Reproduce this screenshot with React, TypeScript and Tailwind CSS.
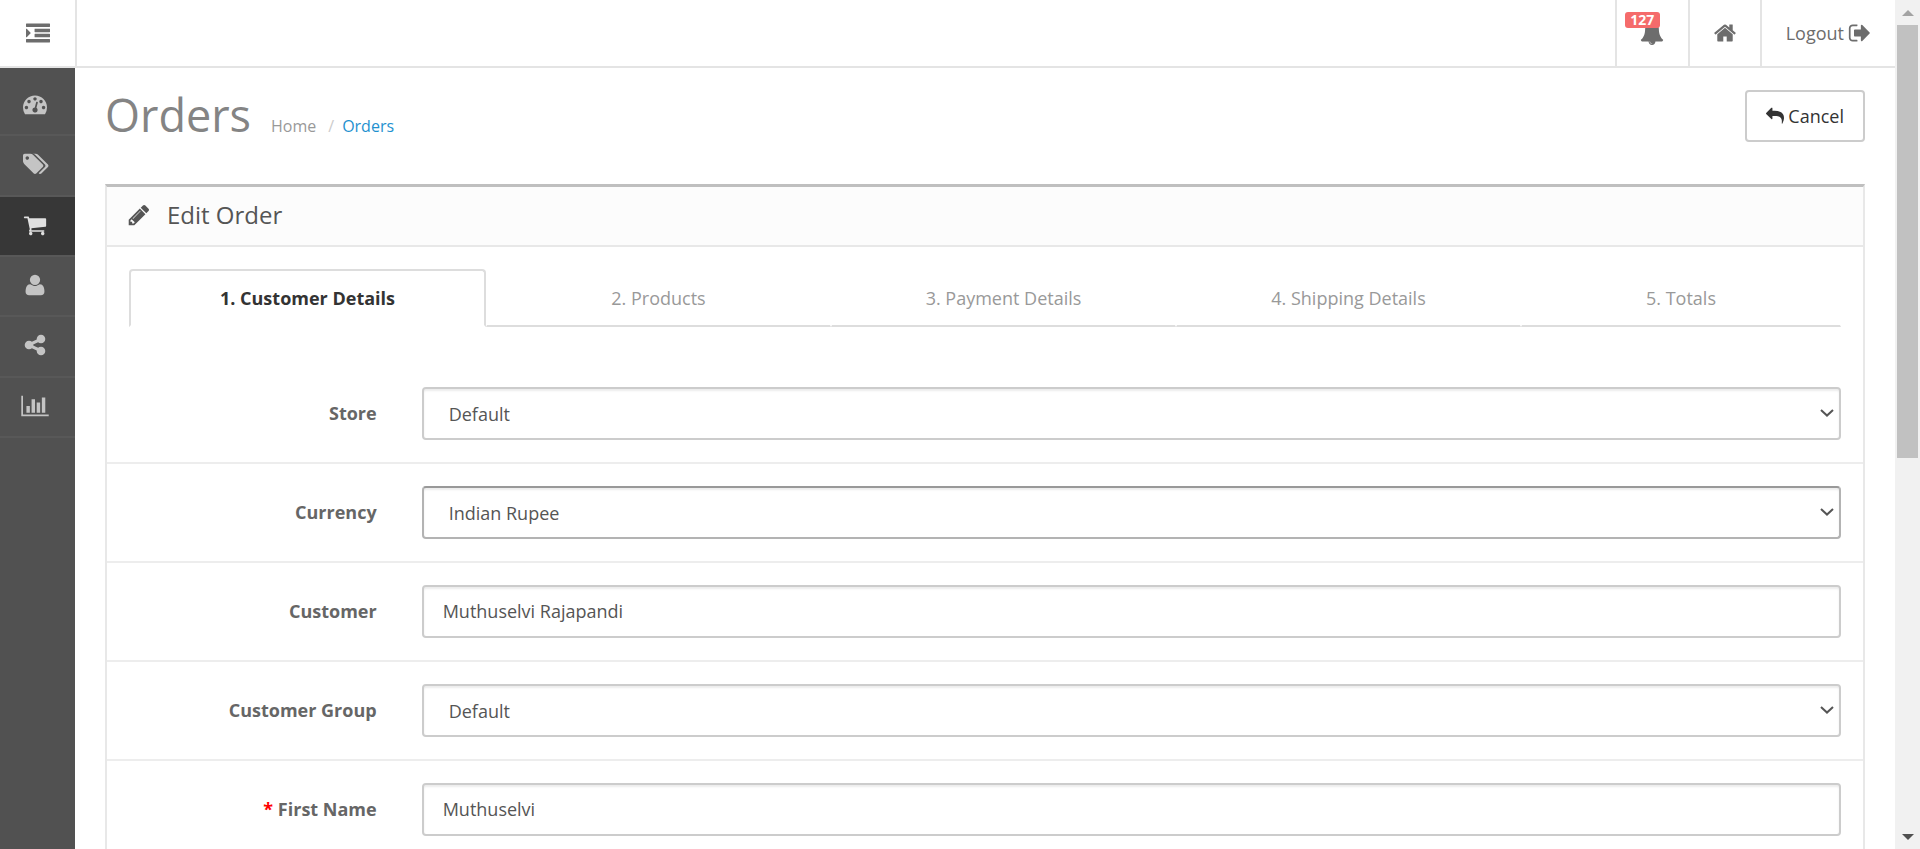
import React from "react";

type IconProps = { d: string; className?: string; viewBox?: string };

function Icon({ d, className = "size-6", viewBox = "0 0 1792 1792" }: IconProps) {
  return (
    <svg viewBox={viewBox} className={`shrink-0 overflow-visible ${className}`} fill="currentColor" aria-hidden="true">
      <path d={d} />
    </svg>
  );
}

const dot = "q0-53-37.5-90.5t-90.5-37.5-90.5 37.5-37.5 90.5 37.5 90.5 90.5 37.5 90.5-37.5 37.5-90.5z";
const bar = "q0 13-9.5 22.5t-22.5 9.5";

const paths = {
  indent:
    `M352 832q0 14-9 23l-288 288q-9 9-23 9-13 0-22.5-9.5t-9.5-22.5v-576q0-13 9.5-22.5t22.5-9.5q14 0 23 9l288 288q9 9 9 23z` +
    `M1792 1312v192${bar}h-1728q-13 0-22.5-9.5t-9.5-22.5v-192q0-13 9.5-22.5t22.5-9.5h1728q13 0 22.5 9.5t9.500 22.500z` +
    `M1792 928v192${bar}h-1088q-13 0-22.5-9.5t-9.5-22.5v-192q0-13 9.5-22.5t22.5-9.5h1088q13 0 22.5 9.5t9.5 22.5z` +
    `M1792 544v192${bar}h-1088q-13 0-22.5-9.5t-9.5-22.5v-192q0-13 9.5-22.5t22.5-9.5h1088q13 0 22.5 9.5t9.5 22.5z` +
    `M1792 160v192${bar}h-1728q-13 0-22.5-9.5t-9.5-22.5v-192q0-13 9.5-22.5t22.5-9.5h1728q13 0 22.5 9.5t9.5 22.5z`,
  dashboard:
    `M384 1152${dot}M576 704${dot}` +
    `M1004 1185l101-382q6-26-7.5-48.5t-38.500-29.500-48 6.500-30 39.500l-101 382q-60 5-107 43.500t-63 98.500q-20 77 20 146t117 89 146-20 89-117q16-60-6-117t-72-91z` +
    `M1664 1152${dot}M1024 512${dot}M1472 704${dot}` +
    `M1792 1152q0 261-141 483-19 29-54 29h-1402q-35 0-54-29-141-221-141-483 0-182 71-348t191-286 286-191 348-71 348 71 286 191 191 286 71 348z`,
  tags: `M448 448${dot}M1515 1024q0 53-37 90l-491 492q-39 37-91 37-53 0-90-37l-715-716q-38-37-64.5-101t-26.5-117v-416q0-52 38-90t90-38h416q53 0 117 26.5t102 64.5l715 714q37 39 37 91zm384 0q0 53-37 90l-491 492q-39 37-91 37-36 0-59-14t-53-45l470-470q37-37 37-90 0-52-37-91l-715-714q-38-38-102-64.5t-117-26.5h224q53 0 117 26.5t102 64.5l715 714q37 39 37 91z`,
  cart: "M704 1536q0 52-38 90t-90 38-90-38-38-90 38-90 90-38 90 38 38 90zm896 0q0 52-38 90t-90 38-90-38-38-90 38-90 90-38 90 38 38 90zm128-1088v512q0 24-16.5 42.5t-40.5 21.5l-1044 122q13 60 13 70 0 16-24 64h920q26 0 45 19t19 45-19 45-45 19h-1024q-26 0-45-19t-19-45q0-11 8-31.5t16-36 21.5-40 15.5-29.5l-177-823h-204q-26 0-45-19t-19-45 19-45 45-19h256q16 0 28.5 6.5t19.5 15.5 13 24.5 8 26 5.5 29.5 4.5 26h1201q26 0 45 19t19 45z",
  user: "M1600 1405q0 120-73 189.5t-194 69.5h-874q-121 0-194-69.5t-73-189.5q0-53 3.5-103.5t14-109 26.5-108.5 43-97.5 62-81 85.5-53.5 111.5-20q9 0 42 21.5t74.5 48 108 48 133.5 21.5 133.5-21.5 108-48 74.5-48 42-21.5q61 0 111.500 20t85.500 53.500 62 81 43 97.500 26.500 108.500 14 109 3.500 103.500zm-320-893q0 159-112.5 271.5t-271.5 112.5-271.5-112.5-112.5-271.5 112.5-271.5 271.5-112.5 271.5 112.5 112.5 271.5z",
  share:
    "M1344 1024q133 0 226.5 93.5t93.5 226.5-93.5 226.5-226.5 93.5-226.5-93.5-93.5-226.5q0-12 2-34l-360-180q-92 86-218 86-133 0-226.5-93.5t-93.5-226.5 93.5-226.5 226.5-93.5q126 0 218 86l360-180q-2-22-2-34 0-133 93.5-226.5t226.5-93.5 226.5 93.5 93.5 226.5-93.5 226.5-226.5 93.5q-126 0-218-86l-360 180q2 22 2 34t-2 34l360 180q92-86 218-86z",
  chart: "M640 896v512h-256v-512h256zm384-512v1024h-256v-1024h256zm1024 1152v128h-2048v-1536h128v1408h1920zm-640-896v768h-256v-768h256zm384-384v1152h-256v-1152h256z",
  bell: "M912 1696q0-16-16-16-59 0-101.5-42.5t-42.5-101.5q0-16-16-16t-16 16q0 73 51.5 124.5t124.5 51.5q16 0 16-16zm816-288q0 52-38 90t-90 38h-448q0 106-75 181t-181 75-181-75-75-181h-448q-52 0-90-38t-38-90q50-42 91-88t85-119.5 74.5-158.5 50-206 19.5-260q0-152 117-282.5t307-158.5q-8-19-8-39 0-40 28-68t68-28 68 28 28 68q0 20-8 39 190 28 307 158.5t117 282.5q0 139 19.5 260t50 206 74.5 158.5 85 119.5 91 88z",
  home: "M1472 992v480q0 26-19 45t-45 19h-384v-384h-256v384h-384q-26 0-45-19t-19-45v-480q0-1 .5-3t.5-3l575-474 575 474q1 2 1 6zm223-69l-62 74q-8 9-21 11h-3q-13 0-21-7l-692-577-692 577q-12 8-24 7-13-2-21-11l-62-74q-8-10-7-23.5t11-21.5l719-599q32-26 76-26t76 26l244 204v-195q0-14 9-23t23-9h192q14 0 23 9t9 23v408l219 182q10 8 11 21.5t-7 23.5z",
  signOut:
    "M704 1440q0 4 1 20t.5 26.5-3 23.5-10 19.5-20.5 6.5h-320q-119 0-203.5-84.5t-84.5-203.5v-704q0-119 84.5-203.5t203.5-84.5h320q13 0 22.5 9.5t9.5 22.5q0 4 1 20t.5 26.5-3 23.5-10 19.5-20.5 6.5h-320q-66 0-113 47t-47 113v704q0 66 47 113t113 47h312l11.5 1 11.5 3 8 5.500 7 9 2 13.500zm928-544q0 26-19 45l-544 544q-19 19-45 19t-45-19-19-45v-288h-448q-26 0-45-19t-19-45v-384q0-26 19-45t45-19h448v-288q0-26 19-45t45-19 45 19l544 544q19 19 19 45z",
  reply:
    "M1792 1120q0 166-127 451-3 7-10.5 24t-13.5 30-13 22q-12 17-28 17-15 0-23.5-10t-8.5-25q0-9 2.5-26.5t2.5-23.5q5-68 5-123 0-101-17.5-181t-48.5-138.5-80-101-105.5-69.5-133-42.5-154-21.5-175.5-6h-224v256q0 26-19 45t-45 19-45-19l-512-512q-19-19-19-45t19-45l512-512q19-19 45-19t45 19 19 45v256h224q713 0 875 403 53 134 53 333z",
  pencil:
    "M491 1536l91-91-235-235-91 91v107h128v128h107zm523-928q0-22-22-22-10 0-17 7l-542 542q-7 7-7 17 0 22 22 22 10 0 17-7l542-542q7-7 7-17zm-54-192l416 416-832 832h-416v-416zm683 96q0 53-37 90l-166 166-416-416 166-165q36-38 90-38 53 0 91 38l235 234q37 39 37 91z",
};

const menu = [
  { label: "Dashboard", d: paths.dashboard, active: false },
  { label: "Catalog", d: paths.tags, active: false },
  { label: "Sales", d: paths.cart, active: true },
  { label: "Customers", d: paths.user, active: false },
  { label: "Marketing", d: paths.share, active: false },
  { label: "Reports", d: paths.chart, active: false, viewBox: "128 0 1792 1792" },
];

const tabs = ["1. Customer Details", "2. Products", "3. Payment Details", "4. Shipping Details", "5. Totals"];

type Field = { id: string; label: string; value: string; kind: "select" | "text"; required?: boolean; hovered?: boolean };

const fields: Field[] = [
  { id: "store", label: "Store", value: "Default", kind: "select" },
  { id: "currency", label: "Currency", value: "Indian Rupee", kind: "select", hovered: true },
  { id: "customer", label: "Customer", value: "Muthuselvi Rajapandi", kind: "text" },
  { id: "customer-group", label: "Customer Group", value: "Default", kind: "select" },
  { id: "firstname", label: "First Name", value: "Muthuselvi", kind: "text", required: true },
];

function Header() {
  return (
    <header className="flex h-[68px] shrink-0 border-b-2 border-[#e4e4e4] bg-white text-[#6d6d6d]">
      <button aria-label="Toggle menu" className="flex w-[77px] items-center justify-center border-r-2 border-[#e4e4e4]">
        <Icon d={paths.indent} viewBox="0 -64 1792 1792" />
      </button>
      <nav className="ml-auto flex">
        <a href="#alerts" aria-label="Alerts" className="relative flex w-[73px] items-center justify-center border-l-2 border-[#e4e4e4]">
          <Icon d={paths.bell} />
          <span className="absolute top-3 left-2 flex h-4 w-[35px] items-center justify-center rounded-[3px] bg-[#f56b6b] text-sm leading-4 font-bold text-white">
            127
          </span>
        </a>
        <a href="#home" aria-label="Home" className="flex w-[72px] items-center justify-center border-l-2 border-[#e4e4e4]">
          <Icon d={paths.home} />
        </a>
        <a href="#logout" className="flex items-center gap-1 border-l-2 border-[#e4e4e4] pr-[23px] pl-6">
          Logout
          <Icon d={paths.signOut} />
        </a>
      </nav>
    </header>
  );
}

function Sidebar() {
  return (
    <nav className="w-[75px] shrink-0 bg-[#515151] pt-2">
      <ul className="grid h-[362px] auto-rows-fr">
        {menu.map((item) => (
          <li key={item.label} className="border-b-2 border-[#585858]">
            <a
              href={`#${item.label.toLowerCase()}`}
              aria-label={item.label}
              className={`flex h-full items-center justify-center pr-1.5 pb-0.5 ${item.active ? "bg-[#373737] text-[#e0e0e0]" : "text-[#c4c4c4]"}`}
            >
              <Icon d={item.d} viewBox={item.viewBox} />
            </a>
          </li>
        ))}
      </ul>
    </nav>
  );
}

function FieldRow({ field }: { field: Field }) {
  const border = field.hovered ? "border-[#b3b3b3] border-t-[#999999]" : "border-[#cccccc]";
  const box = `h-[53px] w-full appearance-none rounded border-2 bg-white text-lg text-[#555555] shadow-[inset_0_2px_2px_rgba(0,0,0,0.075)] outline-none ${border}`;
  return (
    <div className="grid grid-cols-6 items-center border-b-2 border-[#ededed] py-[22px]">
      <label htmlFor={field.id} className="pr-[23px] pb-0.5 text-right font-bold text-[#666666]">
        {field.required && <span className="text-[#ff0000]">* </span>}
        {field.label}
      </label>
      <div className="relative col-span-5 px-[22px]">
        {field.kind === "select" ? (
          <>
            <select id={field.id} defaultValue={field.value} className={`${box} pl-[25px]`}>
              <option>{field.value}</option>
            </select>
            <svg viewBox="0 0 14 8" className="pointer-events-none absolute top-[22px] right-[29px] h-2 w-3.5" fill="none" stroke="#555555" strokeWidth="2" aria-hidden="true">
              <path d="M1 1l6 5.600 6-5.600" />
            </svg>
          </>
        ) : (
          <input id={field.id} type="text" defaultValue={field.value} className={`${box} px-[19px] pb-0.5`} />
        )}
      </div>
    </div>
  );
}

function Scrollbar() {
  return (
    <div className="flex w-[25px] shrink-0 flex-col items-center justify-between bg-[#f1f1f1]" aria-hidden="true">
      <div className="flex w-full flex-col items-center">
        <div className="flex h-[25px] items-center">
          <svg viewBox="0 0 12 6" className="h-1.5 w-3" fill="#a3a3a3">
            <path d="M0 6L6 0l6 6z" />
          </svg>
        </div>
        <div className="h-[51vh] w-[21px] bg-[#c1c1c1]" />
      </div>
      <div className="flex h-[25px] items-center">
        <svg viewBox="0 0 12 6" className="h-1.5 w-3" fill="#505050">
          <path d="M0 0h12L6 6z" />
        </svg>
      </div>
    </div>
  );
}

export default function App() {
  return (
    <div className="flex h-screen overflow-hidden bg-white font-['Open_Sans',sans-serif] text-lg text-[#666666]">
      <div className="flex min-w-0 flex-1 flex-col">
        <Header />
        <div className="flex min-h-0 flex-1">
          <Sidebar />
          <main className="min-w-0 flex-1 overflow-hidden px-[30px] pt-[22px]">
            <div className="flex items-start justify-between">
              <div className="flex items-baseline">
                <h1 className="text-[45px] leading-[50px] text-[#848484]">Orders</h1>
                <ol className="flex items-baseline pl-5 text-base text-[#999999]">
                  <li>
                    <a href="#home">Home</a>
                  </li>
                  <li className="pr-2 pl-3 text-[#cccccc]" aria-hidden="true">
                    /
                  </li>
                  <li>
                    <a href="#orders" className="text-[#1e91cf]">
                      Orders
                    </a>
                  </li>
                </ol>
              </div>
              <button className="flex h-[52px] items-center gap-1 rounded border-2 border-[#cccccc] bg-white px-[19px] text-[#333333]">
                <Icon d={paths.reply} className="size-[18px]" />
                Cancel
              </button>
            </div>

            <section className="mt-[42px] border-2 border-t-3 border-[#e8e8e8] border-t-[#bfbfbf]">
              <div className="flex h-[60px] items-center gap-4 border-b-2 border-[#e8e8e8] bg-[#fcfcfc] px-5 pb-0.5">
                <Icon d={paths.pencil} className="size-6 text-[#555555]" />
                <h2 className="text-2xl leading-8 text-[#555555]">Edit Order</h2>
              </div>
              <div className="pt-[22px]">
                <div role="tablist" className="mx-[22px] mb-[38px] grid grid-cols-[357fr_345fr_345fr_345fr_320fr]">
                  {tabs.map((tab, i) => (
                    <button
                      key={tab}
                      role="tab"
                      aria-selected={i === 0}
                      className={
                        i === 0
                          ? "h-[58px] rounded-t border-2 border-[#dddddd] border-b-transparent font-bold text-[#333333]"
                          : "h-[58px] border-x border-t-2 border-b-2 border-transparent border-b-[#dddddd] text-[#999999]"
                      }
                    >
                      {tab}
                    </button>
                  ))}
                </div>
                <form>
                  {fields.map((field) => (
                    <FieldRow key={field.id} field={field} />
                  ))}
                </form>
              </div>
            </section>
          </main>
        </div>
      </div>
      <Scrollbar />
    </div>
  );
}
